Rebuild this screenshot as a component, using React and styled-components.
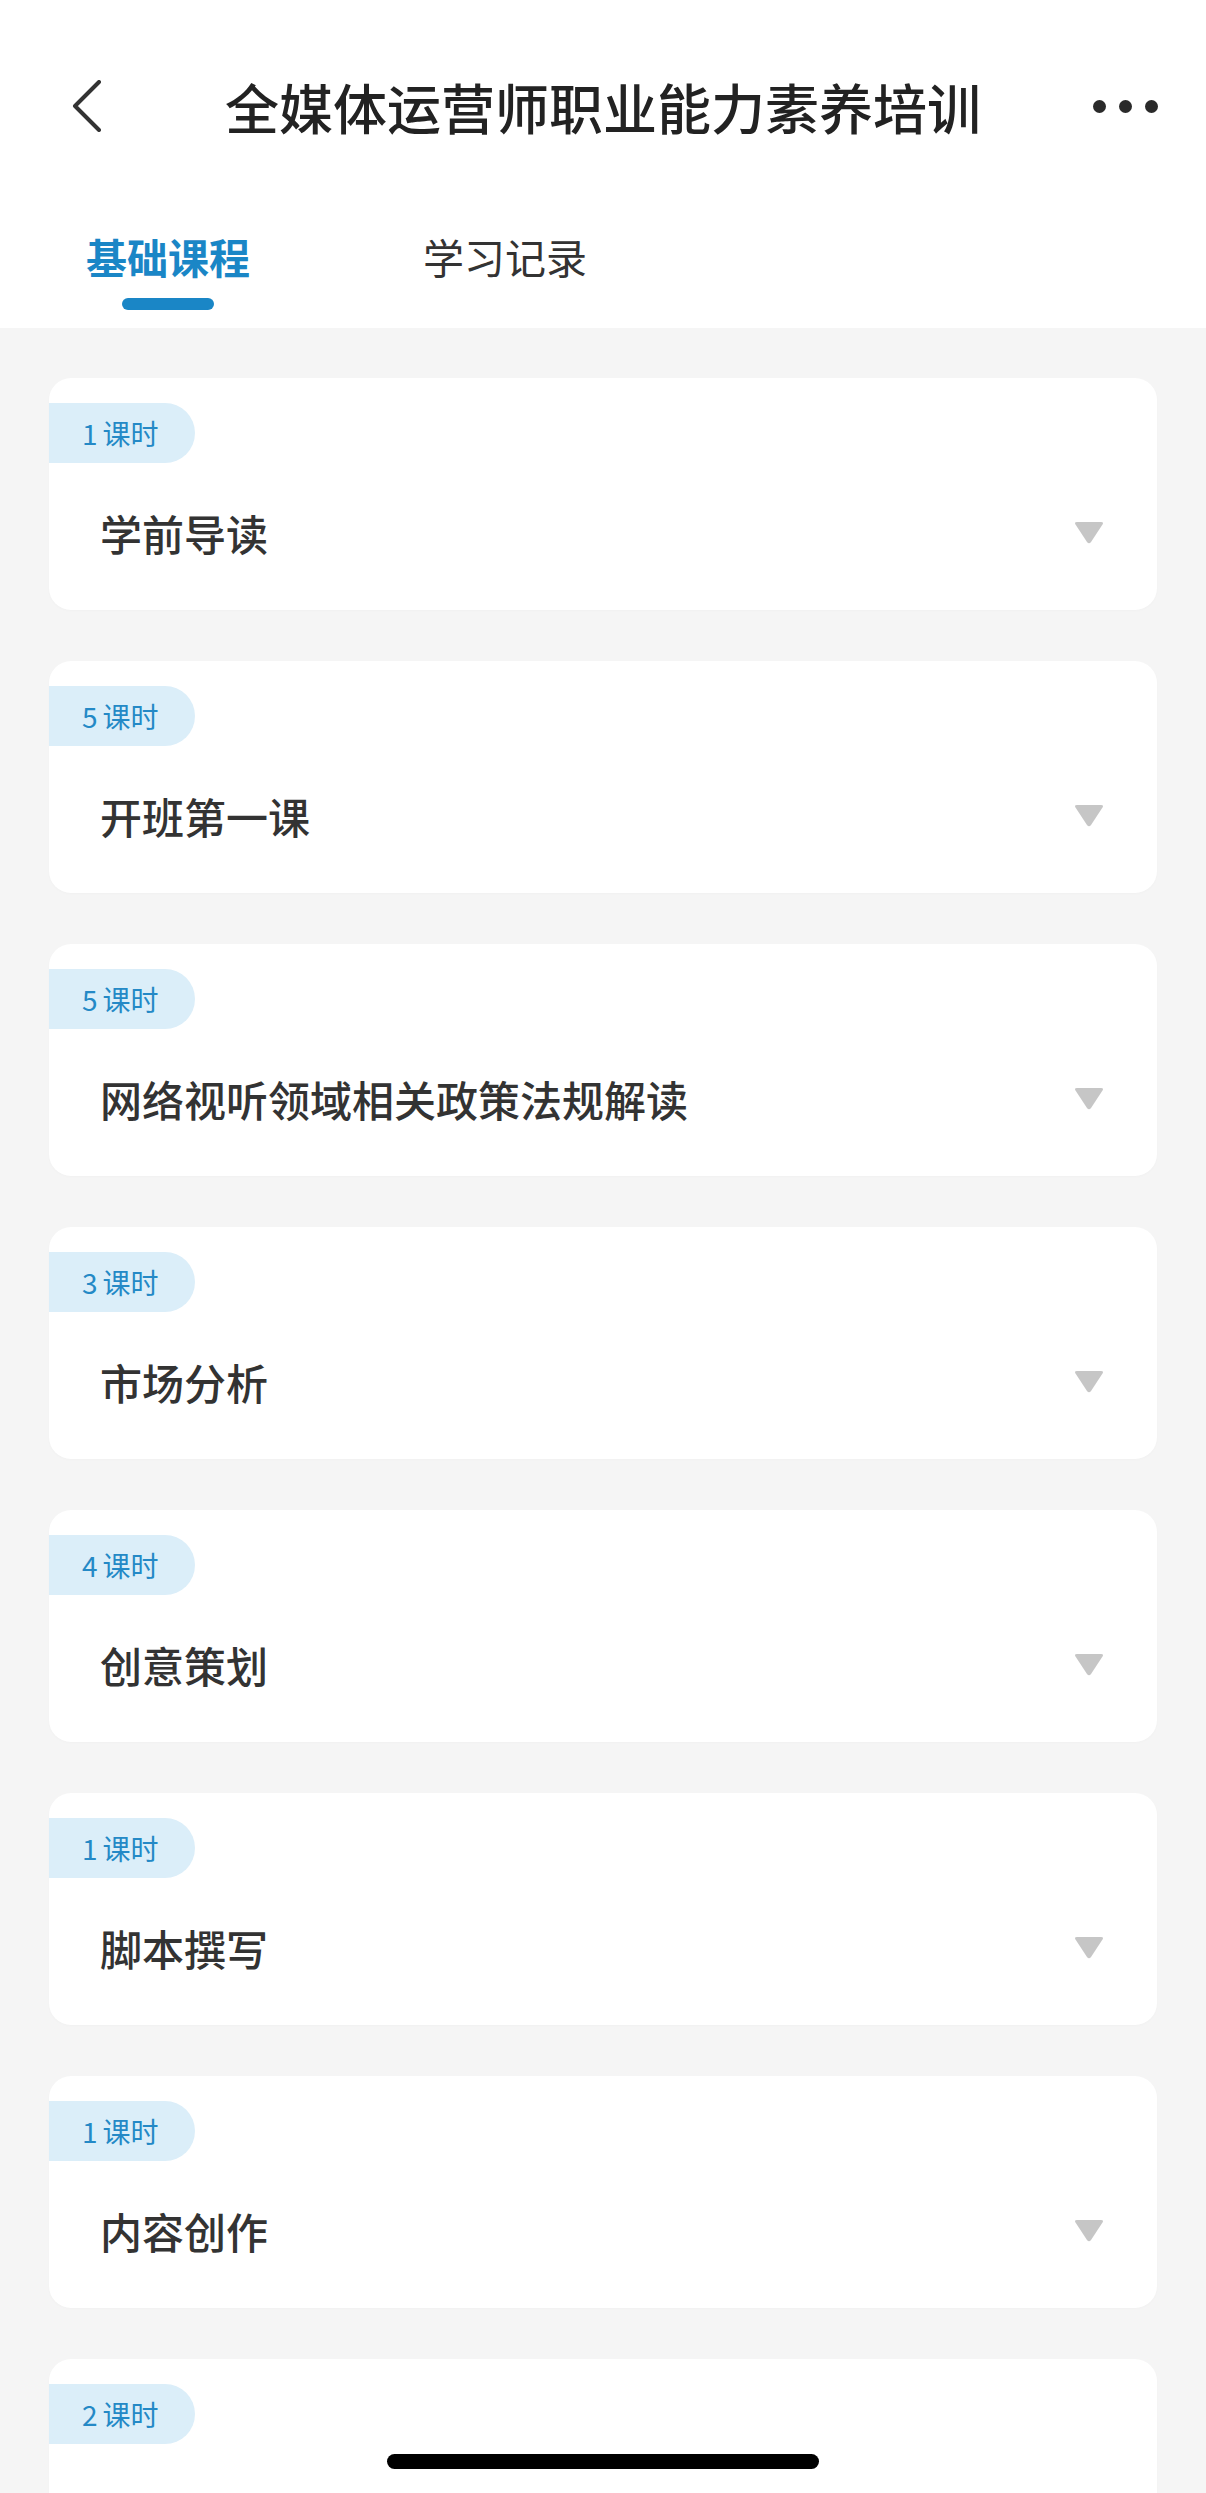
import React from 'react'
import styled, { createGlobalStyle } from 'styled-components'

const GlobalStyle = createGlobalStyle`
  html, body {
    margin: 0;
    padding: 0;
    background: #f5f5f5;
    font-family: "Noto Sans CJK SC", "Noto Sans", sans-serif;
  }
  * { box-sizing: border-box; }
`

const Screen = styled.div`
  position: relative;
  width: 1206px;
  height: 2493px;
  overflow: hidden;
  background: #f5f5f5;
`

const Header = styled.div`
  background: #ffffff;
  padding-top: 56px;
`

const NavBar = styled.div`
  display: grid;
  grid-template-columns: 160px 1fr 160px;
  align-items: center;
  height: 100px;
`

const BackButton = styled.div`
  display: flex;
  align-items: center;
  padding-left: 72px;
`

const Title = styled.h1`
  margin: 0;
  text-align: center;
  font-size: 54px;
  font-weight: 500;
  color: #222222;
  white-space: nowrap;
`

const MoreButton = styled.div`
  display: flex;
  justify-content: flex-end;
  gap: 13px;
  padding-right: 48px;
`

const Dot = styled.span`
  width: 13px;
  height: 13px;
  border-radius: 50%;
  background: #2a2a2a;
`

const Tabs = styled.div`
  display: flex;
  gap: 173px;
  padding: 71px 0 18px 86px;
`

const Tab = styled.div`
  display: flex;
  flex-direction: column;
  align-items: center;
`

const TabLabel = styled.span`
  font-size: 41px;
  line-height: 58px;
  font-weight: ${p => (p.$active ? 600 : 400)};
  color: ${p => (p.$active ? '#1a86c6' : '#333333')};
`

const TabLine = styled.span`
  margin-top: 13px;
  width: 92px;
  height: 12px;
  border-radius: 6px;
  background: ${p => (p.$active ? '#1a86c6' : 'transparent')};
`

const List = styled.div`
  display: flex;
  flex-direction: column;
  gap: 51px;
  padding: 50px 49px;
`

const Card = styled.div`
  background: #ffffff;
  border-radius: 22px;
  padding: 25px 0 49px;
  box-shadow: 0 1px 3px rgba(0, 0, 0, 0.02);
`

const Badge = styled.div`
  display: inline-flex;
  align-items: center;
  height: 60px;
  width: 146px;
  padding-left: 33px;
  border-radius: 0 30px 30px 0;
  background: #dbeef9;
  color: #2489c6;
  font-size: 28px;
`

const Unit = styled.span`
  margin-left: 5px;
`

const Row = styled.div`
  display: flex;
  align-items: center;
  justify-content: space-between;
  margin-top: 40px;
  height: 58px;
  padding: 0 53px 0 51px;
`

const CourseName = styled.span`
  font-size: 42px;
  font-weight: 500;
  color: #333333;
`

const HomeIndicator = styled.div`
  position: absolute;
  left: 387px;
  bottom: 24px;
  width: 432px;
  height: 15px;
  border-radius: 8px;
  background: #000000;
`

// last card is cut by the bottom of the screen, its name is not visible
const courses = [
  { hours: 1, name: '学前导读' },
  { hours: 5, name: '开班第一课' },
  { hours: 5, name: '网络视听领域相关政策法规解读' },
  { hours: 3, name: '市场分析' },
  { hours: 4, name: '创意策划' },
  { hours: 1, name: '脚本撰写' },
  { hours: 1, name: '内容创作' },
  { hours: 2, name: '' },
]

function Chevron() {
  return (
    <svg width="30" height="52" viewBox="0 0 30 52" fill="none">
      <polyline points="27,2 3,26 27,50" stroke="#333" strokeWidth="4" strokeLinecap="round" strokeLinejoin="round" />
    </svg>
  )
}

function Caret() {
  return (
    <svg width="30" height="23" viewBox="0 0 30 23">
      <path d="M3 1 H27 Q30 1 28.5 3.5 L17 21 Q15 23.5 13 21 L1.5 3.5 Q0 1 3 1 Z" fill="#c6c6c6" />
    </svg>
  )
}

export default function App() {
  return (
    <>
      <GlobalStyle />
      <Screen>
        <Header>
          <NavBar>
            <BackButton><Chevron /></BackButton>
            <Title>全媒体运营师职业能力素养培训</Title>
            <MoreButton><Dot /><Dot /><Dot /></MoreButton>
          </NavBar>
          <Tabs>
            <Tab>
              <TabLabel $active>基础课程</TabLabel>
              <TabLine $active />
            </Tab>
            <Tab>
              <TabLabel>学习记录</TabLabel>
              <TabLine />
            </Tab>
          </Tabs>
        </Header>
        <List>
          {courses.map((c, i) => (
            <Card key={i}>
              <Badge>{c.hours}<Unit>课时</Unit></Badge>
              <Row>
                <CourseName>{c.name}</CourseName>
                <Caret />
              </Row>
            </Card>
          ))}
        </List>
        <HomeIndicator />
      </Screen>
    </>
  )
}
